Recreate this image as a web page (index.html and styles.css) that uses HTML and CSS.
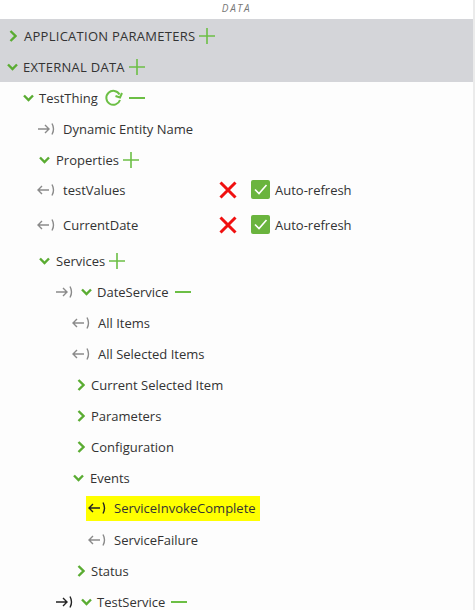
FILE: index.html
```html
<!DOCTYPE html>
<html>
<head>
<meta charset="utf-8">
<link rel="stylesheet" href="styles.css">
</head>
<body>
<div class="panel">
  <div class="title">DATA</div>
  <div class="band">
    <div class="row l0">
      <svg class="chev-r" width="8" height="12" viewBox="0 0 8 12"><polyline points="1.5,1 6.5,6 1.5,11"/></svg>
      <span class="caps">APPLICATION PARAMETERS</span>
      <svg class="plus" width="16" height="16" viewBox="0 0 16 16"><path d="M8 0V16M0 8H16"/></svg>
    </div>
    <div class="row l0">
      <svg class="chev-d" width="11" height="8" viewBox="0 0 11 8"><polyline points="1,1.5 5.5,6 10,1.5"/></svg>
      <span class="caps">EXTERNAL DATA</span>
      <svg class="plus" width="16" height="16" viewBox="0 0 16 16"><path d="M8 0V16M0 8H16"/></svg>
    </div>
  </div>
  <div class="tree">
    <div class="row l1">
      <svg class="chev-d" width="11" height="8" viewBox="0 0 11 8"><polyline points="1,1.5 5.5,6 10,1.5"/></svg>
      <span>TestThing</span>
      <svg class="refresh" width="19" height="19" viewBox="0 0 19 19"><path d="M15.5 6.5A7 7 0 1 0 16 12"/><polyline points="11.5,8 16,9.5 18,5"/></svg>
      <svg class="minus" width="16" height="2" viewBox="0 0 16 2"><path d="M0 1H16"/></svg>
    </div>
    <div class="row l2">
      <svg class="link" width="20" height="14" viewBox="0 0 20 14"><path d="M1 7H12M8 3L12 7L8 11M15 1.5Q18 7 15 12.5"/></svg>
      <span>Dynamic Entity Name</span>
    </div>
    <div class="row l2c">
      <svg class="chev-d" width="11" height="8" viewBox="0 0 11 8"><polyline points="1,1.5 5.5,6 10,1.5"/></svg>
      <span>Properties</span>
      <svg class="plus" width="16" height="16" viewBox="0 0 16 16"><path d="M8 0V16M0 8H16"/></svg>
    </div>
    <div class="row prop l2">
      <svg class="link" width="20" height="14" viewBox="0 0 20 14"><path d="M12 7H1M5 3L1 7L5 11M15 1.5Q18 7 15 12.5"/></svg>
      <span class="pname">testValues</span>
      <svg class="x" width="18" height="18" viewBox="0 0 18 18"><path d="M1.5 1.5L16.5 16.5M16.5 1.5L1.5 16.5"/></svg>
      <span class="check"><svg width="19" height="19" viewBox="0 0 19 19"><polyline points="4,9.5 8,13.5 15.5,5"/></svg></span>
      <span>Auto-refresh</span>
    </div>
    <div class="row prop l2">
      <svg class="link" width="20" height="14" viewBox="0 0 20 14"><path d="M12 7H1M5 3L1 7L5 11M15 1.5Q18 7 15 12.5"/></svg>
      <span class="pname">CurrentDate</span>
      <svg class="x" width="18" height="18" viewBox="0 0 18 18"><path d="M1.5 1.5L16.5 16.5M16.5 1.5L1.5 16.5"/></svg>
      <span class="check"><svg width="19" height="19" viewBox="0 0 19 19"><polyline points="4,9.5 8,13.5 15.5,5"/></svg></span>
      <span>Auto-refresh</span>
    </div>
    <div class="row l2c">
      <svg class="chev-d" width="11" height="8" viewBox="0 0 11 8"><polyline points="1,1.5 5.5,6 10,1.5"/></svg>
      <span>Services</span>
      <svg class="plus" width="16" height="16" viewBox="0 0 16 16"><path d="M8 0V16M0 8H16"/></svg>
    </div>
    <div class="row l3">
      <svg class="link" width="20" height="14" viewBox="0 0 20 14"><path d="M1 7H12M8 3L12 7L8 11M15 1.5Q18 7 15 12.5"/></svg>
      <svg class="chev-d sc" width="11" height="8" viewBox="0 0 11 8"><polyline points="1,1.5 5.5,6 10,1.5"/></svg>
      <span>DateService</span>
      <svg class="minus" width="16" height="2" viewBox="0 0 16 2"><path d="M0 1H16"/></svg>
    </div>
    <div class="row l4">
      <svg class="link" width="20" height="14" viewBox="0 0 20 14"><path d="M12 7H1M5 3L1 7L5 11M15 1.5Q18 7 15 12.5"/></svg>
      <span>All Items</span>
    </div>
    <div class="row l4">
      <svg class="link" width="20" height="14" viewBox="0 0 20 14"><path d="M12 7H1M5 3L1 7L5 11M15 1.5Q18 7 15 12.5"/></svg>
      <span>All Selected Items</span>
    </div>
    <div class="row l4c">
      <svg class="chev-r" width="8" height="12" viewBox="0 0 8 12"><polyline points="1.5,1 6.5,6 1.5,11"/></svg>
      <span>Current Selected Item</span>
    </div>
    <div class="row l4c">
      <svg class="chev-r" width="8" height="12" viewBox="0 0 8 12"><polyline points="1.5,1 6.5,6 1.5,11"/></svg>
      <span>Parameters</span>
    </div>
    <div class="row l4c">
      <svg class="chev-r" width="8" height="12" viewBox="0 0 8 12"><polyline points="1.5,1 6.5,6 1.5,11"/></svg>
      <span>Configuration</span>
    </div>
    <div class="row l4d">
      <svg class="chev-d" width="11" height="8" viewBox="0 0 11 8"><polyline points="1,1.5 5.5,6 10,1.5"/></svg>
      <span>Events</span>
    </div>
    <div class="row l5">
      <span class="hl">
        <svg class="link dark" width="20" height="14" viewBox="0 0 20 14"><path d="M12 7H1M5 3L1 7L5 11M15 1.5Q18 7 15 12.5"/></svg>
        <span>ServiceInvokeComplete</span>
      </span>
    </div>
    <div class="row l5">
      <svg class="link" width="20" height="14" viewBox="0 0 20 14"><path d="M12 7H1M5 3L1 7L5 11M15 1.5Q18 7 15 12.5"/></svg>
      <span>ServiceFailure</span>
    </div>
    <div class="row l4c">
      <svg class="chev-r" width="8" height="12" viewBox="0 0 8 12"><polyline points="1.5,1 6.5,6 1.5,11"/></svg>
      <span>Status</span>
    </div>
    <div class="row l3">
      <svg class="link dark" width="20" height="14" viewBox="0 0 20 14"><path d="M1 7H12M8 3L12 7L8 11M15 1.5Q18 7 15 12.5"/></svg>
      <svg class="chev-d sc" width="11" height="8" viewBox="0 0 11 8"><polyline points="1,1.5 5.5,6 10,1.5"/></svg>
      <span>TestService</span>
      <svg class="minus" width="16" height="2" viewBox="0 0 16 2"><path d="M0 1H16"/></svg>
    </div>
  </div>
</div>
</body>
</html>
```

FILE: styles.css
```css
html, body {
  margin: 0;
  padding: 0;
  background: #fdfdfd;
  overflow: hidden;
}
.panel {
  width: 473px;
  height: 610px;
  border-right: 2px solid #ebebeb;
  font-family: "Open Sans", "Noto Sans", sans-serif;
  font-size: 13px;
  color: #333;
  overflow: hidden;
}
.title {
  height: 19px;
  background: #fff;
  text-align: center;
  font-size: 10px;
  font-style: italic;
  letter-spacing: 1.6px;
  color: #777;
  line-height: 16px;
}
.band {
  background: #d4d5d9;
  padding: 1px 0 0;
}
.row {
  display: flex;
  align-items: center;
  height: 31px;
  white-space: nowrap;
}
.row.prop {
  height: 35px;
  padding-bottom: 6px;
  box-sizing: border-box;
}
.caps { font-size: 13px; letter-spacing: 0.27px; }
.l0 { padding-left: 9px; }
.l0 .chev-r { margin-right: 7px; }
.l0 .chev-d { margin-left: -2px; margin-right: 5px; }
.l1 { padding-left: 23px; }
.l1 .chev-d { margin-right: 5px; }
.l2 { padding-left: 37px; }
.l2c { padding-left: 39px; }
.l2c .chev-d { margin-right: 6px; }
.l3 { padding-left: 55px; }
.l3 .chev-d { margin-left: 0; margin-right: 5px; }
.l4 { padding-left: 72px; }
.l4c { padding-left: 77px; }
.l4c .chev-r { margin-right: 6px; }
.l4d { padding-left: 73px; }
.l4d .chev-d { margin-right: 6px; }
.l5 { padding-left: 88px; }
.link { margin-right: 6px; flex: none; }
.link path { fill: none; stroke: #8a8a8a; stroke-width: 1.4; }
.link.dark path { stroke: #222; }
.chev-r polyline, .chev-d polyline {
  fill: none;
  stroke: #5aac32;
  stroke-width: 2.4;
}
.plus { margin-left: 4px; }
.plus path { stroke: #6cbf45; stroke-width: 1.6; fill: none; }
.minus { margin-left: 6px; }
.minus path { stroke: #6cbf45; stroke-width: 2; }
.refresh { margin-left: 6px; }
.refresh path, .refresh polyline { fill: none; stroke: #6cbf45; stroke-width: 2; }
.pname { width: 156px; }
.x { flex: none; }
.x path { stroke: #f01010; stroke-width: 3; }
.check {
  display: inline-flex;
  width: 19px;
  height: 19px;
  background: #6ab43e;
  border-radius: 2px;
  margin-left: 14px;
  margin-right: 5px;
}
.check polyline { fill: none; stroke: #fff; stroke-width: 1.6; }
.hl {
  display: inline-flex;
  align-items: center;
  background: #ffff00;
  padding: 3px 4px 4px 2px;
  margin-left: -2px;
}
```
